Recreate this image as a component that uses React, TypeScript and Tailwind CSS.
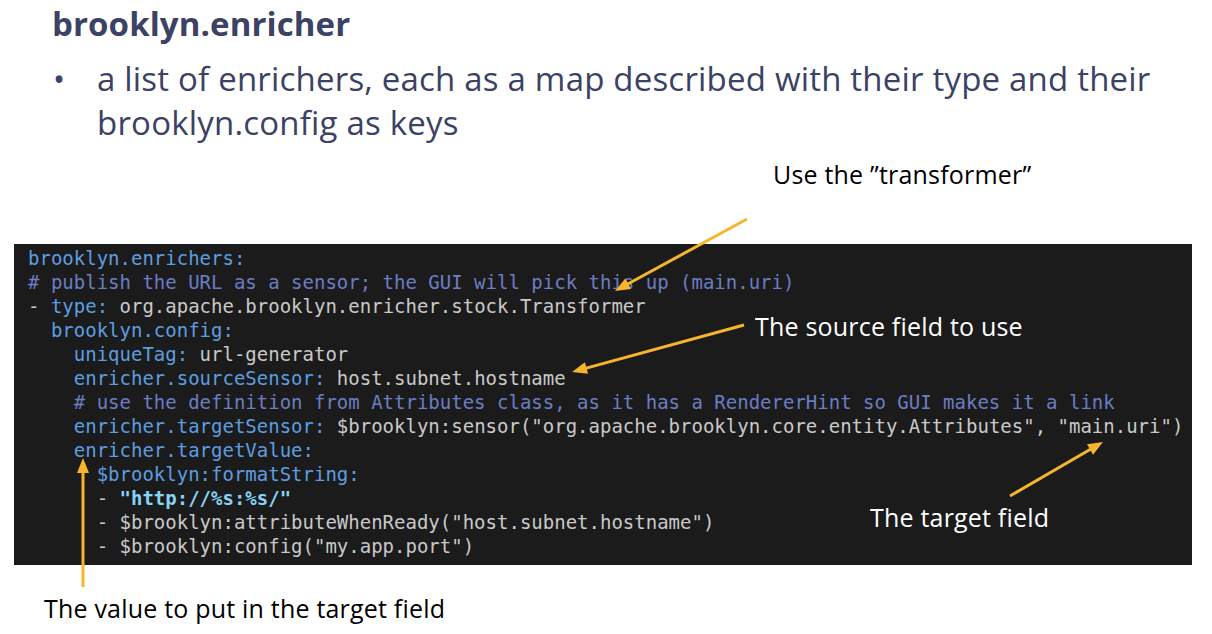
import React from 'react';

type Seg = { t: string; c: 'key' | 'val' | 'cmt' | 'str' };

const colors: Record<Seg['c'], string> = {
  key: 'text-[#5d9ee0]',
  val: 'text-[#c9c9c9]',
  cmt: 'text-[#6b7dc4]',
  str: 'text-[#86d4f6] font-bold',
};

const lines: Seg[][] = [
  [{ t: 'brooklyn.enrichers:', c: 'key' }],
  [{ t: '# publish the URL as a sensor; the GUI will pick this up (main.uri)', c: 'cmt' }],
  [
    { t: '- ', c: 'val' },
    { t: 'type:', c: 'key' },
    { t: ' org.apache.brooklyn.enricher.stock.Transformer', c: 'val' },
  ],
  [{ t: '  brooklyn.config:', c: 'key' }],
  [
    { t: '    uniqueTag:', c: 'key' },
    { t: ' url-generator', c: 'val' },
  ],
  [
    { t: '    enricher.sourceSensor:', c: 'key' },
    { t: ' host.subnet.hostname', c: 'val' },
  ],
  [{ t: '    # use the definition from Attributes class, as it has a RendererHint so GUI makes it a link', c: 'cmt' }],
  [
    { t: '    enricher.targetSensor:', c: 'key' },
    { t: ' $brooklyn:sensor("org.apache.brooklyn.core.entity.Attributes", "main.uri")', c: 'val' },
  ],
  [{ t: '    enricher.targetValue:', c: 'key' }],
  [{ t: '      $brooklyn:formatString:', c: 'key' }],
  [
    { t: '      - ', c: 'val' },
    { t: '"http://%s:%s/"', c: 'str' },
  ],
  [{ t: '      - $brooklyn:attributeWhenReady("host.subnet.hostname")', c: 'val' }],
  [{ t: '      - $brooklyn:config("my.app.port")', c: 'val' }],
];

// arrow from (x1,y1) to tip (x2,y2)
function Arrow({ x1, y1, x2, y2 }: { x1: number; y1: number; x2: number; y2: number }) {
  const dx = x2 - x1;
  const dy = y2 - y1;
  const len = Math.hypot(dx, dy);
  const ux = dx / len;
  const uy = dy / len;
  const head = 15;
  const half = 6;
  const bx = x2 - ux * head;
  const by = y2 - uy * head;
  const pts = `${x2},${y2} ${bx - uy * half},${by + ux * half} ${bx + uy * half},${by - ux * half}`;
  return (
    <g>
      <line x1={x1} y1={y1} x2={bx + ux * 2} y2={by + uy * 2} stroke="#f6b52d" strokeWidth={3} />
      <polygon points={pts} fill="#f6b52d" />
    </g>
  );
}

export default function App() {
  return (
    <div className="relative w-[1212px] h-[634px] bg-white overflow-hidden font-['Open_Sans',sans-serif]">
      <div className="pl-[52px] pt-[3px] text-[#3b4263]">
        <h1 className="text-[33px] font-bold leading-[41px] tracking-[0.1px]">brooklyn.enricher</h1>
        <div className="flex mt-[13px]">
          <span className="w-[45px] text-[32px] leading-[44px] pl-[1px]">•</span>
          <p className="w-[1100px] text-[33px] leading-[44px] tracking-[0.2px]">
            a list of enrichers, each as a map described with their type and their brooklyn.config as keys
          </p>
        </div>
      </div>

      <div className="mt-[99px] ml-[14px] w-[1178px] h-[321px] bg-[#1b1b1b] pl-[14px] pt-[2px] font-['DejaVu_Sans_Mono',monospace] text-[19px] leading-[24px] whitespace-pre">
        {lines.map((line, i) => (
          <div key={i}>
            {line.map((s, j) => (
              <span key={j} className={colors[s.c]}>
                {s.t}
              </span>
            ))}
          </div>
        ))}
      </div>

      <svg className="absolute inset-0 pointer-events-none" width={1212} height={634}>
        <Arrow x1={747} y1={219} x2={615} y2={291} />
        <Arrow x1={744} y1={325} x2={572} y2={372} />
        <Arrow x1={1010} y1={496} x2={1103} y2={442} />
        <Arrow x1={83} y1={587} x2={83} y2={458} />
      </svg>

      <span className="absolute left-[773px] top-[157px] text-[25px] leading-[34px] text-black tracking-[0.2px]">
        Use the ”transformer”
      </span>
      <span className="absolute left-[755px] top-[309px] text-[25px] leading-[34px] text-white tracking-[0.2px]">
        The source field to use
      </span>
      <span className="absolute left-[870px] top-[500px] text-[25px] leading-[34px] text-white tracking-[0.2px]">
        The target field
      </span>
      <span className="absolute left-[44px] top-[591px] text-[25px] leading-[34px] text-black tracking-[0.2px]">
        The value to put in the target field
      </span>
    </div>
  );
}
